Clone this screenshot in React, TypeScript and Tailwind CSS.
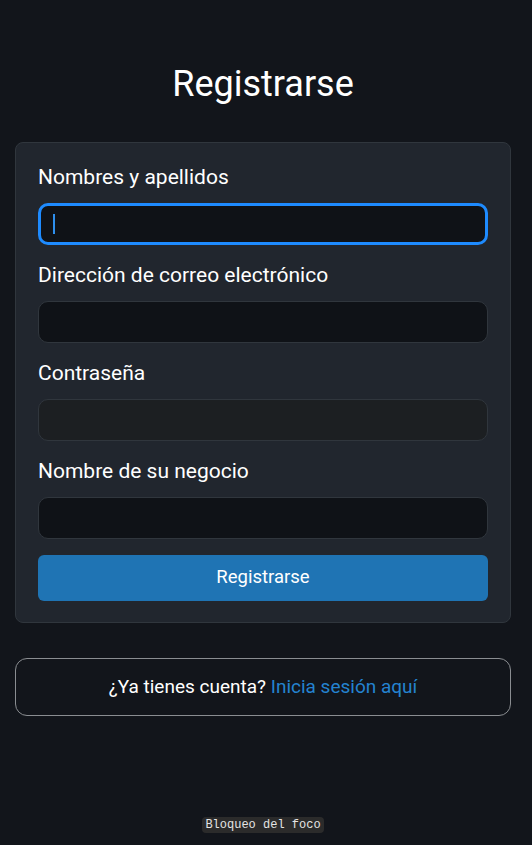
const fields = [
  { label: 'Nombres y apellidos', type: 'text', focused: true, bg: 'bg-[#0f1217]' },
  { label: 'Dirección de correo electrónico', type: 'email', focused: false, bg: 'bg-[#0f1217]' },
  { label: 'Contraseña', type: 'password', focused: false, bg: 'bg-[#1c1f22]' },
  { label: 'Nombre de su negocio', type: 'text', focused: false, bg: 'bg-[#0f1217]' },
]

function Field({ label, type, focused, bg }: { label: string; type: string; focused: boolean; bg: string }) {
  return (
    <div className="flex flex-col gap-3">
      <label className="text-[21px] leading-7 text-white">{label}</label>
      <div className="relative">
        <input
          type={type}
          className={
            focused
              ? `block h-[42px] w-full rounded-[10px] border-[3px] border-[#1e8bff] ${bg} outline-none`
              : `block h-[42px] w-full rounded-[10px] border border-[#30363d] ${bg} outline-none`
          }
        />
        {focused && <span className="absolute left-[15px] top-[11px] h-[20px] w-[2px] bg-[#2e8fee]" />}
      </div>
    </div>
  )
}

export default function App() {
  return (
    <div className="flex min-h-[845px] flex-col items-center bg-[#12151b] pl-[15px] pr-[21px] font-['Roboto',sans-serif]">
      <h1 className="mt-[64px] text-[36px] leading-10 text-white">Registrarse</h1>

      <form className="mt-[38px] flex w-full flex-col gap-4 rounded-lg border border-[#30363d] bg-[#21262e] px-[22px] pt-[20px] pb-[21px]">
        {fields.map(f => (
          <Field key={f.label} {...f} />
        ))}
        <button
          type="button"
          className="h-[46px] w-full rounded-md bg-[#1f74b4] text-[18.5px] text-white"
        >
          Registrarse
        </button>
      </form>

      <div className="mt-[35px] flex h-[58px] w-full items-center justify-center rounded-xl border border-[#8a8d91] text-[19px] text-white">
        ¿Ya tienes cuenta?&nbsp;<a className="text-[#2483d0]">Inicia sesión aquí</a>
      </div>

      <div className="mt-auto mb-[12px] rounded bg-[#2b2b2b] px-[3px] font-['Liberation_Mono',monospace] text-[12px] leading-4 text-[#e4e4e4]">
        Bloqueo del foco
      </div>
    </div>
  )
}
